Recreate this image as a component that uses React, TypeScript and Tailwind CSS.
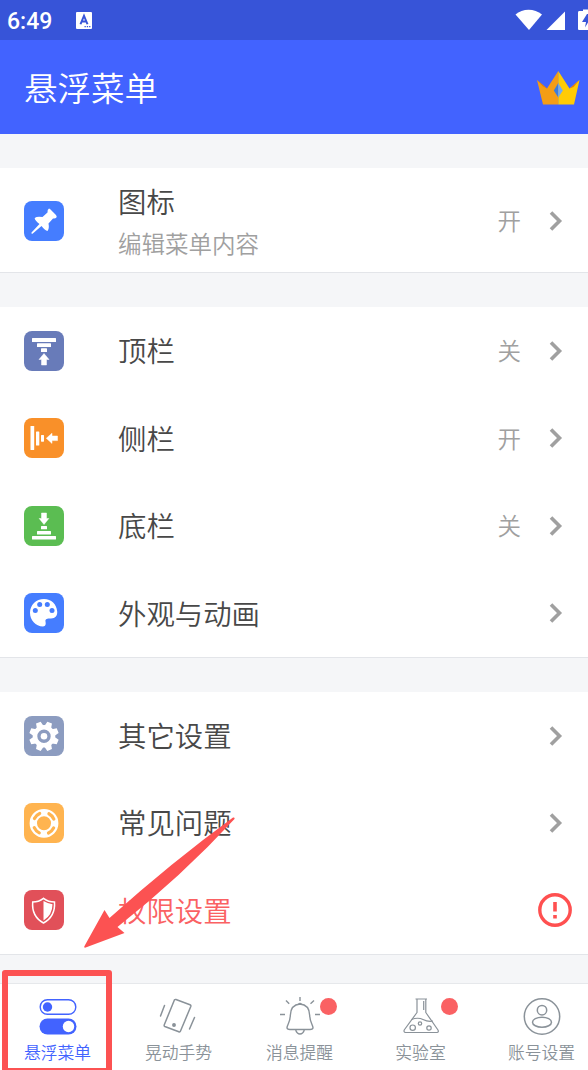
import type { ReactNode } from "react";

type Row = {
  label: string;
  icon: ReactNode;
  color: string;
  hint?: string;
  value?: string;
  warning?: boolean;
};

const mainRows: Row[] = [
  { label: "图标", hint: "编辑菜单内容", value: "开", icon: <PinIcon />, color: "bg-[#457dff]" },
];

const barRows: Row[] = [
  { label: "顶栏", value: "关", icon: <TopBarIcon />, color: "bg-[#687bb9]" },
  { label: "侧栏", value: "开", icon: <SideBarIcon />, color: "bg-[#f99029]" },
  { label: "底栏", value: "关", icon: <BottomBarIcon />, color: "bg-[#5bbd52]" },
  { label: "外观与动画", icon: <PaletteIcon />, color: "bg-[#457dff]" },
];

const otherRows: Row[] = [
  { label: "其它设置", icon: <GearIcon />, color: "bg-[#8c9cc0]" },
  { label: "常见问题", icon: <LifebuoyIcon />, color: "bg-[#ffb450]" },
  { label: "权限设置", icon: <ShieldIcon />, color: "bg-[#e15059]", warning: true },
];

const tabs = [
  { label: "悬浮菜单", icon: <TogglesIcon />, active: true, badge: false },
  { label: "晃动手势", icon: <ShakeIcon />, active: false, badge: false },
  { label: "消息提醒", icon: <BellIcon />, active: false, badge: true },
  { label: "实验室", icon: <FlaskIcon />, active: false, badge: true },
  { label: "账号设置", icon: <AccountIcon />, active: false, badge: false },
];

export default function App() {
  return (
    <div className="relative flex h-[1070px] w-[588px] flex-col overflow-hidden bg-[#f5f6f8] font-['Noto_Sans_CJK_SC',sans-serif] font-[350]">
      <StatusBar />

      <header className="flex h-[94px] shrink-0 items-center justify-between bg-[#4263ff] pl-6 pr-2">
        <h1 className="text-[33.5px] leading-none text-white">悬浮菜单</h1>
        <CrownIcon />
      </header>

      <main className="flex flex-col pt-[34px]">
        <Section rows={mainRows} className="h-[105px] pt-0.5" />
        <Section rows={barRows} className="mt-[34px] h-[351px]" />
        <Section rows={otherRows} className="mt-[34px] h-[263px]" />
      </main>

      <TabBar />
      <Pointer />
    </div>
  );
}

function StatusBar() {
  return (
    <div className="flex h-10 shrink-0 items-center bg-[#3754d8] text-white">
      <span className="w-[76px] pl-[7px] pt-0.5 font-[Roboto,sans-serif] text-[23px] font-medium leading-none">
        6:49
      </span>
      <svg className="h-[17px] w-4" viewBox="0 0 16 18" preserveAspectRatio="none">
        <rect width="16" height="18" rx="1" fill="currentColor" />
        <path d="M4.500 13 8 4l3.500 9M5.800 10h4.400" fill="none" stroke="#3754d8" strokeWidth="2" />
        <path d="M8.500 15.500h1.300m1 0h1.300m1 0h1.300" stroke="#3754d8" strokeWidth="1.200" />
      </svg>
      <svg className="ml-auto h-10 w-[76px]" viewBox="0 0 76 40" fill="currentColor">
        <path d="M3.500 14.500C10.500 8 22.500 8 30 14.500L17 30Z" />
        <path d="M53 11.500V30H34.500Z" />
        <path d="M71 11.500V9.500h5v2.500zM66 12.500q0-1.500 1-1.500h9v19h-9q-1 0-1-1z" />
        <path d="M75 14 70 22h4l-1 5.500L76 22.500V14Z" fill="#3754d8" />
      </svg>
    </div>
  );
}

function Section({ rows, className }: { rows: Row[]; className: string }) {
  return (
    <section className={`flex shrink-0 flex-col border-b border-[#e3e5e9] bg-white ${className}`}>
      {rows.map((row) => (
        <div key={row.label} className="flex flex-1 items-center pl-6 pr-4">
          <div className={`size-10 overflow-hidden rounded-lg ${row.color}`}>{row.icon}</div>
          <div className={`ml-[54px] flex flex-1 flex-col ${row.hint ? "pt-px" : "pb-px"}`}>
            <span
              className={`text-[28.4px] leading-[42px] ${row.warning ? "text-[#fa6163]" : "text-[#484848]"}`}
            >
              {row.label}
            </span>
            {row.hint && (
              <span className="text-[23.5px] leading-[42px] text-[#a0a0a0]">{row.hint}</span>
            )}
          </div>
          {row.value && (
            <span className="mr-[28px] text-[23.5px] leading-none text-[#a0a0a0]">{row.value}</span>
          )}
          {row.warning ? <AlertIcon /> : <ChevronIcon />}
        </div>
      ))}
    </section>
  );
}

function TabBar() {
  return (
    <nav className="-ml-[3px] mt-7 flex h-[88px] w-[605px] shrink-0 border-t border-[#e6e8eb] bg-white">
      {tabs.map((tab) => (
        <div
          key={tab.label}
          className={`relative flex flex-1 flex-col items-center pt-[11px] ${tab.active ? "text-[#4263ff]" : "text-[#8a9299]"}`}
        >
          {tab.icon}
          <span className="mt-0.5 text-[16.8px] leading-[24px]">{tab.label}</span>
          {tab.badge && (
            <span className="absolute left-[81px] top-[14px] size-[17px] rounded-full bg-[#fa6163]" />
          )}
        </div>
      ))}
    </nav>
  );
}

// Red frame round the first tab and the arrow that leads to it
function Pointer() {
  return (
    <>
      <div className="absolute left-[2px] top-[970px] h-[103px] w-[110px] rounded-[3px] border-[6px] border-b-[5px] border-[#fc5252]" />
      <svg className="absolute left-[84px] top-[816px] h-[132px] w-[152px]" viewBox="84 816 152 132">
        <path
          d="M233 817.500Q235 817 234.500 819Q182 876 117.500 927L124.500 933L85 947.800Q83.800 947.800 84.500 946L104.500 910L109.500 918Q172 862 233 817.500Z"
          fill="#fc5252"
        />
      </svg>
    </>
  );
}

function ChevronIcon() {
  return (
    <svg className="mr-[9px] h-5 w-[14px]" viewBox="0 0 14 20" fill="none" stroke="#a0a0a0">
      <path d="M2 1.500 10.500 10 2 18.500" strokeWidth="3.600" />
    </svg>
  );
}

function AlertIcon() {
  return (
    <svg className="size-[34px]" viewBox="0 0 34 34" fill="none" stroke="#ff5050">
      <circle cx="17" cy="17" r="15.200" strokeWidth="3.400" />
      <path d="M17 9v9.500M17 22v3.500" strokeWidth="3.600" />
    </svg>
  );
}

function CrownIcon() {
  return (
    <svg className="mt-px h-[35px] w-11" viewBox="0 0 44 35">
      <path d="M1 10 11 18.500 22.300 1V34.500H7Z" fill="#f49d16" />
      <path d="M43.500 10 33.500 18.500 22.300 1V34.500H38Z" fill="#ffcb05" />
      <path d="M1 10 11 18.500 7 16.500ZM43.500 10 33.500 18.500 37.500 17Z" fill="#e27a12" />
      <path d="M22.300 13 17.800 20.500 22.300 27.500Z" fill="#3b7ddd" />
      <path d="M22.300 13 26.800 20.500 22.300 27.500Z" fill="#72a8f5" />
    </svg>
  );
}

function PinIcon() {
  return (
    <svg viewBox="0 0 40 40" fill="white">
      <path d="M25 7.500Q26 7.500 27 9L32 14Q33.500 16 32 17Q30 17.500 29 17.500L24.500 22.500Q25.500 27.500 23.500 30Q21 29.500 17.500 25L8.500 32.700Q7 33 7.500 31.500L15.500 23Q10.500 19 10.700 17Q13 15 18.500 16L23.500 11.500Q23.200 8.500 25 7.500Z" />
    </svg>
  );
}

function TopBarIcon() {
  return (
    <svg viewBox="0 0 40 40" fill="white">
      <rect x="8" y="7" width="24" height="4" rx=".6" />
      <rect x="13" y="12.300" width="14" height="3.700" rx=".6" />
      <rect x="17" y="17.300" width="6" height="3.700" rx=".6" />
      <path d="M20 22.500 25 28.500H22.500V34h-5V28.500H15Z" stroke="white" strokeWidth=".5" strokeLinejoin="round" />
    </svg>
  );
}

function SideBarIcon() {
  return (
    <svg viewBox="0 0 40 40" fill="white">
      <rect x="6.500" y="8" width="3.700" height="24" rx=".6" />
      <rect x="12" y="13.500" width="3.300" height="14" rx=".6" />
      <rect x="17" y="17" width="3" height="6.700" rx=".6" />
      <path d="M22.300 20.300 28 15.200V18h5.500v4.600H28v2.800Z" stroke="white" strokeWidth=".5" strokeLinejoin="round" />
    </svg>
  );
}

function BottomBarIcon() {
  return (
    <svg viewBox="0 0 40 40" fill="white">
      <path d="M20 18.500 15.200 12.500h2.300V7h5v5.500h2.300Z" stroke="white" strokeWidth=".5" strokeLinejoin="round" />
      <rect x="17" y="20" width="6" height="3.300" rx=".6" />
      <rect x="13" y="25" width="14" height="3.500" rx=".6" />
      <rect x="8" y="30" width="24" height="3.500" rx=".6" />
    </svg>
  );
}

function PaletteIcon() {
  return (
    <svg viewBox="0 0 40 40">
      <path
        d="M20 6C12 6 6 12.200 6 19.700C6 27 11.500 33.200 19 33.500C21.800 33.300 22 31 21.500 28.500C21 26 23 25.500 27 25.500C31.500 25.500 33.500 22.500 33.200 18.500C32.500 11 27.500 6 20 6Z"
        fill="white"
      />
      <g fill="#457dff">
        <circle cx="11.300" cy="17.500" r="2.500" />
        <circle cx="15.700" cy="11.500" r="2.500" />
        <circle cx="23.300" cy="11.500" r="2.500" />
        <circle cx="28" cy="17.500" r="2.500" />
      </g>
    </svg>
  );
}

function GearIcon() {
  return (
    <svg viewBox="0 0 40 40" fill="white">
      {[22.5, 67.5, 112.5, 157.5].map((angle) => (
        <path
          key={angle}
          transform={`rotate(${angle} 20 20.3)`}
          d="M17.500 5.500h5l1.300 6h-7.600zM17.500 35.100h5l1.300-6h-7.600z"
        />
      ))}
      <circle cx="20" cy="20.300" r="9" fill="none" stroke="white" strokeWidth="4.600" />
      <circle cx="20" cy="20.300" r="3.300" />
    </svg>
  );
}

function LifebuoyIcon() {
  return (
    <svg viewBox="0 0 40 40" fill="none">
      <circle cx="20" cy="20.300" r="10.700" stroke="white" strokeWidth="7.400" />
      <circle
        cx="20"
        cy="20.300"
        r="10.700"
        stroke="#ffb450"
        strokeWidth="3.200"
        strokeLinecap="round"
        strokeDasharray="7.310 9.500"
        strokeDashoffset="-4.750"
      />
    </svg>
  );
}

function ShieldIcon() {
  return (
    <svg viewBox="0 0 40 40" fill="none">
      <path
        d="M19.500 8.300Q24.500 12 30.500 12Q31.500 26.500 19.500 33Q7.500 26.500 8.700 12Q14.500 12 19.500 8.300Z"
        stroke="white"
        strokeWidth="1.500"
      />
      <path d="M19.500 11Q24 13.700 28.500 14.200Q28.500 25 19.500 30.500Z" fill="white" />
    </svg>
  );
}

function TogglesIcon() {
  return (
    <svg className="h-[43px] w-11" viewBox="0 0 44 43">
      <rect x="4.200" y="4.700" width="35.600" height="14.600" rx="7.300" fill="none" stroke="currentColor" strokeWidth="1.400" />
      <circle cx="11.500" cy="12" r="4.700" fill="currentColor" />
      <rect x="3.500" y="23.500" width="37" height="16" rx="8" fill="currentColor" />
      <circle cx="32.500" cy="31.500" r="5.700" fill="white" />
    </svg>
  );
}

function ShakeIcon() {
  return (
    <svg className="h-[43px] w-11" viewBox="0 0 44 43" fill="none" stroke="currentColor" strokeWidth="1.500" strokeLinecap="round" strokeLinejoin="round">
      <path d="M17.500 4.700Q18 4.200 19 4.500L33 9.800Q34.200 10.300 33.800 11.500L23.500 36Q23 37.300 21.800 36.800L7.800 31.500Q6.800 31 7.300 29.800Z" />
      <path d="M7.500 10.500 3.500 21M37.500 22.500 32.500 34" />
      <circle cx="17" cy="30" r="1.200" fill="currentColor" />
    </svg>
  );
}

function BellIcon() {
  return (
    <svg className="h-[43px] w-11" viewBox="0 0 44 43" fill="none" stroke="currentColor" strokeWidth="1.400">
      <path d="M22 9C15 9.500 12.500 14 12.300 20.500C12.100 27.500 9.500 29 9 32.500Q9 34.500 12 34.500H32Q35 34.500 35 32.500C34.500 29 32 27.500 31.700 20.500C31.500 14 29 9.500 22 9Z" strokeLinejoin="round" />
      <path d="M17.700 35Q19 39 22 39T26.300 35M20.500 9.500Q22 7.500 23.500 9.500" />
      <path d="M22 2v4M8 5.500 11.200 8.800M36 5.500 32.500 8.800M2 19.500h5M37 19.500h5" />
    </svg>
  );
}

function FlaskIcon() {
  return (
    <svg className="h-[43px] w-11" viewBox="0 0 44 43" fill="none" stroke="currentColor" strokeWidth="1.200">
      <path d="M16.500 4H28M18 4.500V17.500L5.200 35Q4.500 37.300 6.500 37.500H38Q40 37.300 39 35L26.800 17.500V4.500" strokeLinejoin="round" />
      <path d="M24.700 6v9M12.500 24.500Q19 22 24 24.500T34 26" />
      <circle cx="13.700" cy="32.700" r="2.700" />
      <circle cx="21" cy="28.500" r="1.700" />
      <circle cx="30" cy="33" r="2.200" />
    </svg>
  );
}

function AccountIcon() {
  return (
    <svg className="h-[43px] w-11" viewBox="0 0 44 43" fill="none" stroke="currentColor" strokeWidth="1.500">
      <circle cx="22" cy="21.500" r="17.700" />
      <circle cx="22" cy="15.200" r="4.700" />
      <ellipse cx="22" cy="27.200" rx="9.500" ry="5" />
    </svg>
  );
}
